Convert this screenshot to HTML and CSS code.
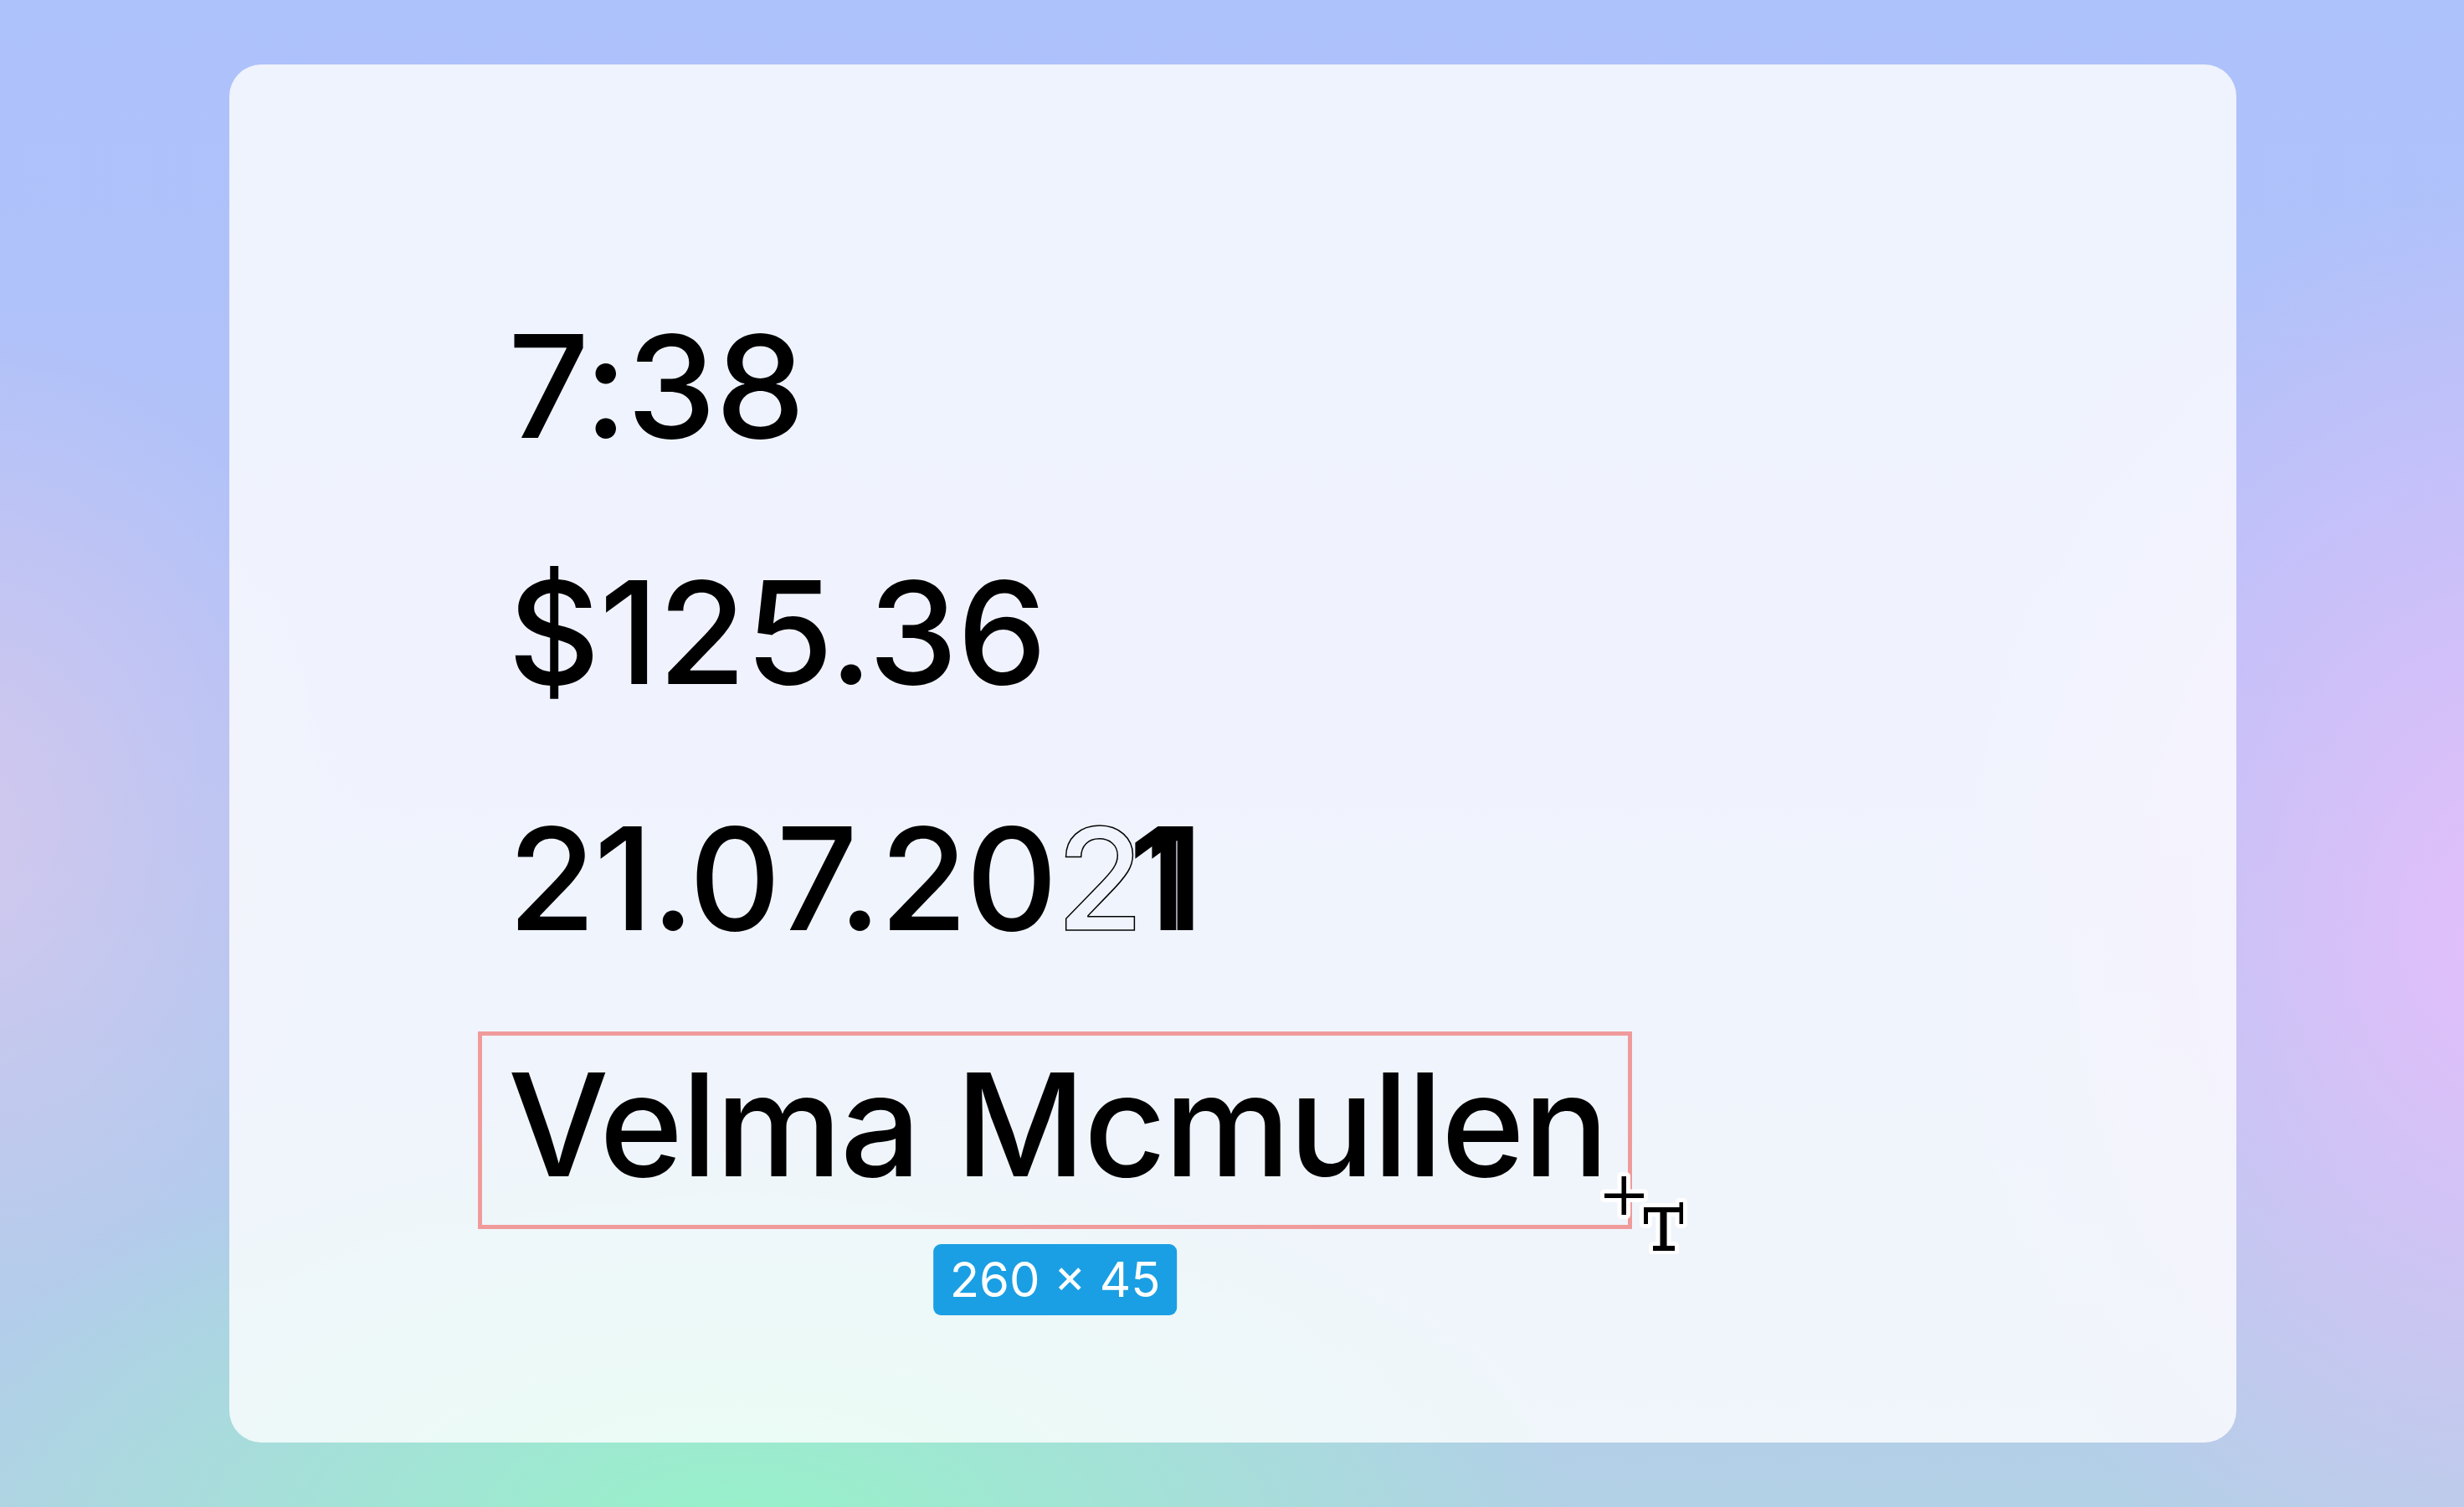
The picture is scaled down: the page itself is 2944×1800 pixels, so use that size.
FILE: index.html
```html
<!DOCTYPE html>
<html lang="en">
<head>
<meta charset="utf-8">
<title>Text styles</title>
<link rel="stylesheet" href="styles.css">
</head>
<body>
<div class="stage">
  <main class="card">
    <div class="lines">
      <div class="line digits">7:38</div>
      <div class="line digits">$125.36</div>
      <div class="line date">21.07.20<span class="outline">2</span><span class="stack"><span class="one">1</span><span class="one shifted">1</span></span></div>
      <div class="selection">
        <div class="line name">Velma Mcmullen</div>
        <div class="size-badge">260 × 45</div>
        <svg class="cursor" width="110" height="100" viewBox="0 0 110 100" aria-hidden="true">
          <g fill="#fff" stroke="#fff" stroke-width="10" stroke-linejoin="round">
            <rect x="7" y="27.5" width="47" height="5.5"/>
            <rect x="27.5" y="7" width="5.5" height="46"/>
            <rect x="54" y="44" width="47" height="6"/>
            <rect x="54" y="44" width="5" height="20"/>
            <rect x="96.5" y="38" width="4.5" height="26"/>
            <rect x="73.5" y="50" width="8" height="41"/>
            <rect x="65" y="90" width="26" height="6"/>
          </g>
          <g fill="#000">
            <rect x="7" y="27.5" width="47" height="5.5"/>
            <rect x="27.5" y="7" width="5.5" height="46"/>
            <rect x="54" y="44" width="47" height="6"/>
            <rect x="54" y="44" width="5" height="20"/>
            <rect x="96.5" y="38" width="4.5" height="26"/>
            <rect x="73.5" y="50" width="8" height="41"/>
            <rect x="65" y="90" width="26" height="6"/>
          </g>
        </svg>
      </div>
    </div>
  </main>
</div>
</body>
</html>
```
FILE: styles.css
```css
html, body {
  margin: 0;
  padding: 0;
}

body {
  width: 2944px;
  height: 1800px;
  overflow: hidden;
  font-family: "Inter", "Noto Sans", sans-serif;
  background:
    radial-gradient(ellipse 1000px 520px at 30% 102%, rgba(150, 242, 200, 1) 0%, rgba(150, 242, 200, 0) 100%),
    radial-gradient(ellipse 700px 900px at 102% 62%, rgba(228, 190, 250, 1) 0%, rgba(228, 190, 250, 0) 100%),
    radial-gradient(ellipse 500px 600px at -2% 55%, rgba(214, 200, 236, 0.9) 0%, rgba(214, 200, 236, 0) 100%),
    linear-gradient(180deg, #adc1fb 0%, #b3c2f7 45%, #b2d0e6 100%);
}

.stage {
  padding: 77px 0 0 274px;
}

.card {
  box-sizing: border-box;
  width: 2398px;
  height: 1646px;
  border-radius: 38px;
  background: rgba(255, 255, 255, 0.8);
  padding: 237px 0 0 0;
  display: flex;
}

.lines {
  display: flex;
  flex-direction: column;
  align-items: flex-start;
  padding-left: 333px;
}

.line {
  font-size: 170px;
  line-height: 294px;
  font-weight: 500;
  color: #000;
  white-space: nowrap;
}

.digits {
  letter-spacing: -0.5px;
}

.date {
  letter-spacing: -2px;
}

.outline {
  color: transparent;
  -webkit-text-stroke: 1.5px #000;
}

.stack {
  display: inline-grid;
  margin-left: -16px;
}

.one {
  grid-area: 1 / 1;
}

.shifted {
  transform: translateX(20px);
}

.selection {
  position: relative;
  margin-top: 36px;
  margin-left: -36px;
  border: 5px solid #f09b9b;
  padding: 0 25px 14px 31px;
}

.name {
  line-height: 212px;
  letter-spacing: -2px;
}

.size-badge {
  position: absolute;
  top: calc(100% + 23px);
  left: 50%;
  transform: translateX(-50%);
  height: 85px;
  line-height: 85px;
  padding: 0 20px;
  border-radius: 9px;
  background: #1a9fe4;
  color: #fff;
  font-size: 58px;
  white-space: nowrap;
}

.cursor {
  position: absolute;
  left: calc(100% - 35px);
  bottom: -35px;
}
```
